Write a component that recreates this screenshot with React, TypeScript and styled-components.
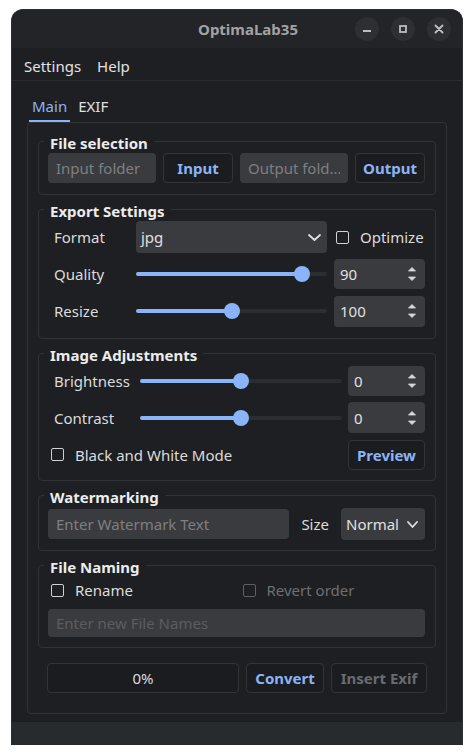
import React from "react";
import styled, { createGlobalStyle } from "styled-components";

const Global = createGlobalStyle`
  html, body { margin: 0; padding: 0; background: #ffffff; }
  body { font-family: "Noto Sans", "Open Sans", sans-serif; font-size: 15px; }
  * { box-sizing: border-box; }
`;

const BLUE = "#8ab4f8";
const FIELD = "#3a3b3e";
const LINE = "#303236";

const Page = styled.div`
  width: 472px;
  height: 756px;
  padding: 9px 9px 0 11px;
`;

const Window = styled.div`
  width: 452px;
  height: 736px;
  display: flex;
  flex-direction: column;
  background: #1e1f22;
  border: 1px solid #2e2f32;
  border-bottom: none;
  border-radius: 12px 12px 0 0;
  overflow: hidden;
`;

const TitleBar = styled.div`
  height: 38px;
  flex: none;
  display: grid;
  grid-template-columns: 1fr auto 1fr;
  align-items: center;
  padding: 0 11px 0 33px;
  background: #232427;
`;

const Title = styled.div`
  font-weight: 700;
  font-size: 15px;
  color: #a2a2a2;
`;

const Controls = styled.div`
  justify-self: end;
  display: flex;
  gap: 12px;
`;

const CtrlButton = styled.div`
  width: 24px;
  height: 24px;
  border-radius: 50%;
  background: #2e2f32;
  display: flex;
  align-items: center;
  justify-content: center;
`;

const MenuBar = styled.div`
  height: 33px;
  flex: none;
  display: flex;
  align-items: center;
  gap: 16px;
  padding: 3px 12px 0;
  border-bottom: 1px solid #2b2c2f;
  background: #1e1f22;
`;

const MenuItem = styled.span`
  color: #e2e2e2;
  font-size: 15px;
`;

const Body = styled.div`
  flex: 1;
  display: flex;
  flex-direction: column;
  padding: 0 15px 8px;
`;

const TabBar = styled.div`
  height: 41px;
  display: flex;
  align-items: flex-end;
  gap: 5px;
  padding-left: 2px;
`;

const Tab = styled.div<{ $active?: boolean }>`
  height: 28px;
  line-height: 24px;
  padding: 0 3px;
  font-size: 15px;
  color: ${(p) => (p.$active ? BLUE : "#e0e0e0")};
  border-bottom: 2px solid ${(p) => (p.$active ? BLUE : "transparent")};
`;

const Pane = styled.div`
  height: 592px;
  display: flex;
  flex-direction: column;
  gap: 4px;
  padding: 8px 10px 20px;
  border: 1px solid ${LINE};
  border-radius: 4px;
`;

const Group = styled.fieldset<{ $pt: number; $pb: number }>`
  margin: 0;
  min-inline-size: 0;
  padding: ${(p) => p.$pt}px 10px ${(p) => p.$pb}px 9px;
  border: 1px solid ${LINE};
  border-radius: 4px;
`;

const Legend = styled.legend`
  margin-left: -4px;
  padding: 4px 6px 0;
  line-height: 16px;
  font-size: 15px;
  font-weight: 700;
  color: #ececec;
`;

const Row = styled.div<{ $h: number; $gap: number }>`
  height: ${(p) => p.$h}px;
  display: flex;
  align-items: center;
  gap: ${(p) => p.$gap}px;
`;

const Grid = styled.div<{ $cols: string; $rows: number; $gap: number }>`
  display: grid;
  grid-template-columns: ${(p) => p.$cols};
  grid-auto-rows: ${(p) => p.$rows}px;
  row-gap: ${(p) => p.$gap}px;
  align-items: center;
`;

const Label = styled.span<{ $indent?: number }>`
  padding-left: ${(p) => p.$indent ?? 0}px;
  color: #dcdcdc;
  font-size: 15px;
  white-space: nowrap;
`;

const EndCell = styled.div<{ $inset: number }>`
  padding-left: ${(p) => p.$inset}px;
  display: flex;
  align-items: center;
`;

const Field = styled.input<{ $h?: number; $grow?: boolean }>`
  flex: ${(p) => (p.$grow ? "1 1 0" : "none")};
  min-width: 0;
  width: 100%;
  height: ${(p) => p.$h ?? 30}px;
  border: none;
  outline: none;
  border-radius: 4px;
  background: ${FIELD};
  padding: 0 8px;
  font-family: "Noto Sans", sans-serif;
  font-size: 15px;
  color: #dcdcdc;
  &::placeholder {
    color: #7e7f82;
  }
  &:disabled::placeholder {
    color: #5c5d60;
  }
`;

const Button = styled.button<{ $w: number; $off?: boolean }>`
  flex: none;
  width: ${(p) => p.$w}px;
  height: 30px;
  border: 1px solid #323438;
  border-radius: 4px;
  background: #1b1c1f;
  font-family: "Noto Sans", sans-serif;
  font-size: 15px;
  font-weight: 700;
  color: ${(p) => (p.$off ? "#6a6b6e" : BLUE)};
  padding: 0;
`;

const Combo = styled.div<{ $w?: number; $pr: number }>`
  width: ${(p) => (p.$w ? `${p.$w}px` : "100%")};
  flex: none;
  height: 32px;
  border-radius: 4px;
  background: ${FIELD};
  display: flex;
  align-items: center;
  justify-content: space-between;
  padding: 0 ${(p) => p.$pr}px 0 5px;
  color: #e0e0e0;
  font-size: 15px;
`;

const Spin = styled.div<{ $h: number }>`
  width: 100%;
  height: ${(p) => p.$h}px;
  border-radius: 4px;
  background: ${FIELD};
  display: flex;
  align-items: center;
  justify-content: space-between;
  padding: 0 9px 0 6px;
  color: #e0e0e0;
  font-size: 15px;
`;

const Check = styled.label<{ $off?: boolean; $ml: number }>`
  display: flex;
  align-items: center;
  gap: 11px;
  margin-left: ${(p) => p.$ml}px;
  color: ${(p) => (p.$off ? "#6e6f72" : "#dcdcdc")};
  font-size: 15px;
  white-space: nowrap;
`;

const Box = styled.span<{ $off?: boolean }>`
  width: 13px;
  height: 13px;
  flex: none;
  border: 1.5px solid ${(p) => (p.$off ? "#5e5f62" : "#d2d2d2")};
  border-radius: 2px;
`;

const SliderWrap = styled.div`
  position: relative;
  height: 16px;
  display: flex;
  align-items: center;
`;

const Groove = styled.div`
  position: relative;
  flex: 1;
  height: 4px;
  border-radius: 2px;
  background: #2c2d30;
`;

const Fill = styled.div`
  position: absolute;
  left: 0;
  top: 0;
  bottom: 0;
  border-radius: 2px;
  background: ${BLUE};
`;

const Handle = styled.div`
  position: absolute;
  top: 50%;
  width: 16px;
  height: 16px;
  margin: -8px 0 0 -8px;
  border-radius: 50%;
  background: ${BLUE};
`;

const Progress = styled.div`
  flex: 1;
  height: 30px;
  border: 1px solid #323438;
  border-radius: 4px;
  background: #1b1c1f;
  display: flex;
  align-items: center;
  justify-content: center;
  color: #dcdcdc;
  font-size: 15px;
`;

const BottomRow = styled.div`
  margin: 11px 9px 0 9px;
  display: flex;
  gap: 7px;
`;

const HalfGrid = styled.div`
  height: 22px;
  display: grid;
  grid-template-columns: 1fr 1fr;
  column-gap: 6px;
  align-items: center;
`;

const Stack = styled.div<{ $gap: number }>`
  display: flex;
  flex-direction: column;
  gap: ${(p) => p.$gap}px;
`;

const StatusBar = styled.div`
  height: 23px;
  flex: none;
  background: #282b2d;
`;

const Chevron = ({ w }: { w: number }) => (
  <svg width={w} height={7} viewBox={`0 0 ${w} 7`}>
    <polyline
      points={`1,1 ${w / 2},6 ${w - 1},1`}
      fill="none"
      stroke="#e0e0e0"
      strokeWidth="1.8"
      strokeLinecap="round"
      strokeLinejoin="round"
    />
  </svg>
);

const Arrows = () => (
  <svg width="8" height="14" viewBox="0 0 8 14">
    <polygon points="0.5,4 4,0.5 7.5,4" fill="#d8d8d8" stroke="#d8d8d8" strokeWidth="0.8" strokeLinejoin="round" />
    <polygon points="0.5,10 7.5,10 4,13.5" fill="#d8d8d8" stroke="#d8d8d8" strokeWidth="0.8" strokeLinejoin="round" />
  </svg>
);

const Slider = ({ frac }: { frac: number }) => {
  const pos = `calc(8px + ${frac} * (100% - 16px))`;
  return (
    <SliderWrap>
      <Groove>
        <Fill style={{ width: pos }} />
        <Handle style={{ left: pos }} />
      </Groove>
    </SliderWrap>
  );
};

export default function App() {
  return (
    <>
      <Global />
      <Page>
        <Window>
          <TitleBar>
            <span />
            <Title>OptimaLab35</Title>
            <Controls>
              <CtrlButton>
                <svg width="10" height="10" viewBox="0 0 10 10">
                  <line x1="1" y1="7" x2="9" y2="7" stroke="#bdbdbd" strokeWidth="2" />
                </svg>
              </CtrlButton>
              <CtrlButton>
                <svg width="10" height="10" viewBox="0 0 10 10">
                  <rect x="2" y="2" width="6" height="6" fill="none" stroke="#bdbdbd" strokeWidth="1.8" />
                </svg>
              </CtrlButton>
              <CtrlButton>
                <svg width="10" height="10" viewBox="0 0 10 10">
                  <path d="M1.5 1.5 L8.5 8.5 M8.5 1.5 L1.5 8.5" stroke="#bdbdbd" strokeWidth="1.9" strokeLinecap="round" />
                </svg>
              </CtrlButton>
            </Controls>
          </TitleBar>
          <MenuBar>
            <MenuItem>Settings</MenuItem>
            <MenuItem>Help</MenuItem>
          </MenuBar>
          <Body>
            <TabBar>
              <Tab $active>Main</Tab>
              <Tab>EXIF</Tab>
            </TabBar>
            <Pane>
              <Group $pt={2} $pb={11}>
                <Legend>File selection</Legend>
                <Row $h={30} $gap={7}>
                  <Field $grow placeholder="Input folder" />
                  <Button $w={70}>Input</Button>
                  <Field $grow placeholder="Output fold..." />
                  <Button $w={70}>Output</Button>
                </Row>
              </Group>

              <Group $pt={2} $pb={11}>
                <Legend>Export Settings</Legend>
                <Grid $cols="88px 191px 1fr" $rows={32} $gap={5}>
                  <Label $indent={6}>Format</Label>
                  <Combo $pr={6}>
                    <span>jpg</span>
                    <Chevron w={13} />
                  </Combo>
                  <EndCell $inset={7}>
                    <Check $ml={2}>
                      <Box />
                      Optimize
                    </Check>
                  </EndCell>

                  <Label $indent={6}>Quality</Label>
                  <Slider frac={0.9} />
                  <EndCell $inset={7}>
                    <Spin $h={30}>
                      <span>90</span>
                      <Arrows />
                    </Spin>
                  </EndCell>

                  <Label $indent={6}>Resize</Label>
                  <Slider frac={0.5} />
                  <EndCell $inset={7}>
                    <Spin $h={31}>
                      <span>100</span>
                      <Arrows />
                    </Spin>
                  </EndCell>
                </Grid>
              </Group>

              <Group $pt={2} $pb={10}>
                <Legend>Image Adjustments</Legend>
                <Grid $cols="92px 202px 1fr" $rows={31} $gap={6}>
                  <Label $indent={6}>Brightness</Label>
                  <Slider frac={0.5} />
                  <EndCell $inset={6}>
                    <Spin $h={30}>
                      <span>0</span>
                      <Arrows />
                    </Spin>
                  </EndCell>

                  <Label $indent={6}>Contrast</Label>
                  <Slider frac={0.5} />
                  <EndCell $inset={6}>
                    <Spin $h={31}>
                      <span>0</span>
                      <Arrows />
                    </Spin>
                  </EndCell>

                  <Check $ml={3}>
                    <Box />
                    Black and White Mode
                  </Check>
                  <span />
                  <EndCell $inset={6}>
                    <Button $w={77}>Preview</Button>
                  </EndCell>
                </Grid>
              </Group>

              <Group $pt={3} $pb={10}>
                <Legend>Watermarking</Legend>
                <Row $h={32} $gap={12}>
                  <Field $grow placeholder="Enter Watermark Text" />
                  <Label>Size</Label>
                  <Combo $w={84} $pr={7}>
                    <span>Normal</span>
                    <Chevron w={11} />
                  </Combo>
                </Row>
              </Group>

              <Group $pt={4} $pb={10}>
                <Legend>File Naming</Legend>
                <Stack $gap={8}>
                  <HalfGrid>
                    <Check $ml={3}>
                      <Box />
                      Rename
                    </Check>
                    <Check $ml={3} $off>
                      <Box $off />
                      Revert order
                    </Check>
                  </HalfGrid>
                  <Field $h={28} disabled placeholder="Enter new File Names" />
                </Stack>
              </Group>

              <BottomRow>
                <Progress>0%</Progress>
                <Button $w={78}>Convert</Button>
                <Button $w={96} $off>
                  Insert Exif
                </Button>
              </BottomRow>
            </Pane>
          </Body>
          <StatusBar />
        </Window>
      </Page>
    </>
  );
}
